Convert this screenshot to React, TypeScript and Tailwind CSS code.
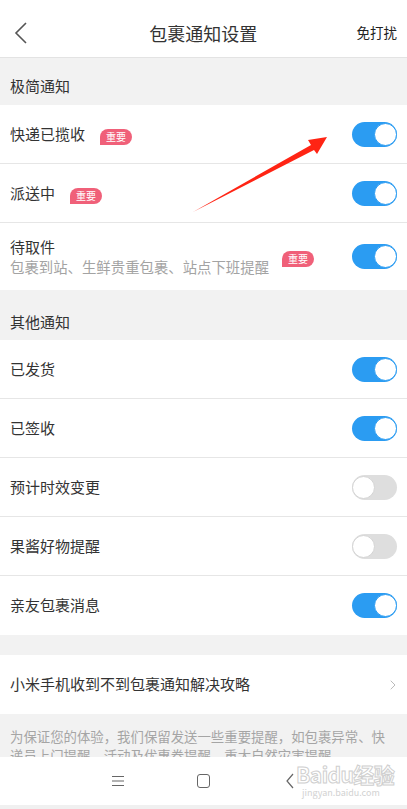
import { ChevronRight } from "lucide-react";

const font = { fontFamily: '"Noto Sans CJK SC", "Noto Sans", sans-serif' };

function Toggle({ on }: { on: boolean }) {
  return (
    <div
      className={`w-[45px] h-[25px] rounded-full flex items-center shrink-0 ${
        on ? "bg-[#2b9cf2] justify-end" : "bg-[#dedede] justify-start"
      }`}
    >
      <div
        className={`w-[23px] h-[23px] rounded-full bg-white border ${
          on ? "border-[#2b9cf2]" : "border-[#d4d4d4]"
        }`}
      />
    </div>
  );
}

function Badge() {
  return (
    <span className="inline-flex items-center justify-center w-[32px] h-[16px] rounded-full rounded-bl-[4px] bg-[#f06079] text-white text-[10px] leading-none">
      重要
    </span>
  );
}

type Row = { label: string; badge?: boolean; on: boolean };

const simple: Row[] = [
  { label: "快递已揽收", badge: true, on: true },
  { label: "派送中", badge: true, on: true },
];

const others: Row[] = [
  { label: "已发货", on: true },
  { label: "已签收", on: true },
  { label: "预计时效变更", on: false },
  { label: "果酱好物提醒", on: false },
  { label: "亲友包裹消息", on: true },
];

function SettingRow({ row, last }: { row: Row; last?: boolean }) {
  return (
    <div
      className={`h-[59px] flex items-center pl-[10px] pr-[10px] ${
        last ? "" : "border-b border-[#e6e6e6]"
      }`}
    >
      <span className="text-[15px] text-[#333]">{row.label}</span>
      {row.badge && (
        <span className="ml-[15px]">
          <Badge />
        </span>
      )}
      <div className="flex-1" />
      <Toggle on={row.on} />
    </div>
  );
}

export default function App() {
  return (
    <div className="relative w-[407px] h-[809px] overflow-hidden bg-[#f2f2f2]" style={font}>
      {/* header */}
      <div className="h-[58px] bg-white border-b border-[#e3e3e3] flex items-center pt-[8px] px-[10px]">
        <svg width="16" height="22" viewBox="0 0 16 22" className="ml-[4px]">
          <polyline points="12,1 2,11 12,21" fill="none" stroke="#555" strokeWidth="1.6" />
        </svg>
        <div className="flex-1 text-center text-[18px] text-[#333] leading-none pl-[20px]">包裹通知设置</div>
        <span className="text-[13.5px] text-[#222] leading-none">免打扰</span>
      </div>

      {/* 极简通知 */}
      <div className="h-[47px] flex items-end pb-[8px] pl-[10px] text-[15px] text-[#333]">极简通知</div>
      <div className="bg-white">
        {simple.map((r) => (
          <SettingRow key={r.label} row={r} />
        ))}
        <div className="h-[67px] flex items-center pl-[10px] pr-[10px]">
          <div className="flex flex-col">
            <span className="text-[15px] text-[#333] leading-[20px]">待取件</span>
            <span className="text-[14.4px] text-[#a3a3a3] leading-[20px]">包裹到站、生鲜贵重包裹、站点下班提醒</span>
          </div>
          <div className="flex-1" />
          <span className="mr-[38px] mb-[1px]">
            <Badge />
          </span>
          <Toggle on />
        </div>
      </div>

      {/* 其他通知 */}
      <div className="h-[50px] flex items-end pb-[7px] pl-[10px] text-[15px] text-[#333]">其他通知</div>
      <div className="bg-white">
        {others.map((r, i) => (
          <SettingRow key={r.label} row={r} last={i === others.length - 1} />
        ))}
      </div>

      <div className="h-[20px]" />
      <div className="h-[59px] bg-white flex items-center pl-[10px] pr-[6px]">
        <span className="flex-1 text-[15px] text-[#333]">小米手机收到不到包裹通知解决攻略</span>
        <ChevronRight size={16} strokeWidth={1.2} color="#aaa" />
      </div>

      <div className="h-[44px] overflow-hidden px-[10px] pt-[13px] text-[13.4px] text-[#a5a5a5] leading-[19px]">
        为保证您的体验，我们保留发送一些重要提醒，如包裹异常、快递员上门提醒、活动及优惠券提醒、重大自然灾害提醒
      </div>

      {/* system nav bar */}
      <div className="absolute left-0 right-0 top-[757px] h-[48px] bg-white">
        <svg width="14" height="12" viewBox="0 0 14 12" className="absolute left-[111px] top-[18px]">
          <path d="M1 1.5h12M1 6h12M1 10.5h12" stroke="#666" strokeWidth="1.2" />
        </svg>
        <div className="absolute left-[197px] top-[17px] w-[13px] h-[14px] border border-[#666] rounded-[3px]" />
        <svg width="10" height="16" viewBox="0 0 10 16" className="absolute left-[285px] top-[16px]">
          <polyline points="8,1 2,8 8,15" fill="none" stroke="#666" strokeWidth="1.2" />
        </svg>
        <div className="absolute left-[296px] top-[5px] text-[21px] font-bold leading-[24px] text-white [-webkit-text-stroke:1px_#cfcfcf] tracking-tight">
          Baidu经验
        </div>
        <div className="absolute left-[302px] top-[31px] text-[9px] leading-[10px] text-[#d2d2d2]">jingyan.baidu.com</div>
      </div>
      <div className="absolute left-0 right-0 top-[805px] h-[4px] bg-[#f0f0f0]" />

      {/* red arrow annotation */}
      <svg className="absolute left-0 top-0 pointer-events-none" width="407" height="809">
        <polygon points="193,212 311,145 308,140 327,137 317,154 314,150" fill="#ff2414" />
      </svg>
    </div>
  );
}
